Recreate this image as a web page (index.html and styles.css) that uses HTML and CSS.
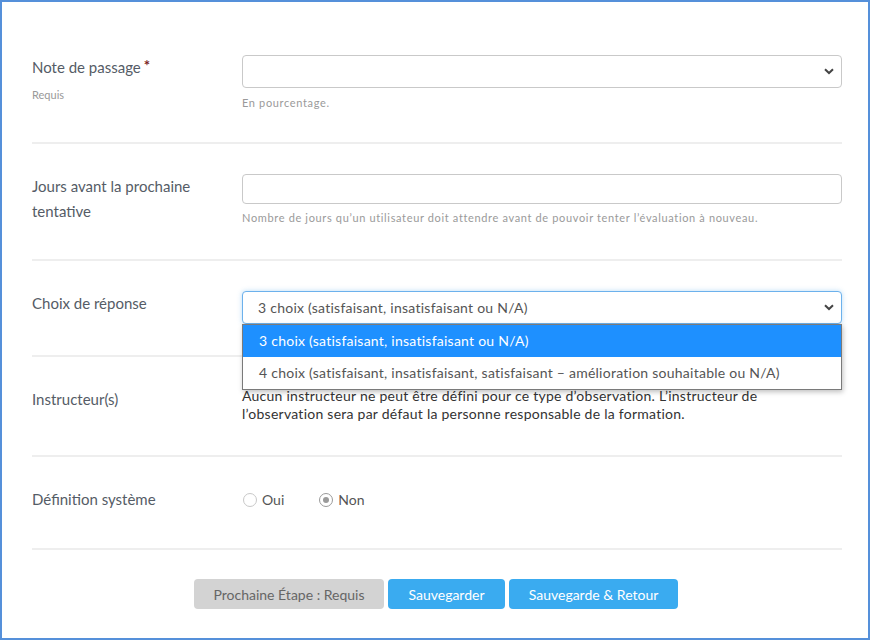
FILE: index.html
```html
<!DOCTYPE html>
<html lang="fr">
<head>
<meta charset="utf-8">
<title>Formulaire</title>
<link rel="stylesheet" href="styles.css">
</head>
<body>
<div class="frame">
  <form class="form">
    <div class="row row-1">
      <div class="label-col">
        <div class="label">Note de passage<span class="req">*</span></div>
        <div class="sub">Requis</div>
      </div>
      <div class="field">
        <div class="select"><span class="value"></span><svg class="chev" width="10" height="7" viewBox="0 0 10 7"><path d="M1 1.2 L5 5 L9 1.2" fill="none" stroke="#444" stroke-width="2"/></svg></div>
        <div class="help">En pourcentage.</div>
      </div>
    </div>
    <div class="row row-2">
      <div class="label-col">
        <div class="label">Jours avant la prochaine tentative</div>
      </div>
      <div class="field">
        <div class="input"></div>
        <div class="help help-tight">Nombre de jours qu’un utilisateur doit attendre avant de pouvoir tenter l’évaluation à nouveau.</div>
      </div>
    </div>
    <div class="row row-3">
      <div class="label-col">
        <div class="label">Choix de réponse</div>
      </div>
      <div class="field">
        <div class="select-wrap">
          <div class="select focus"><span class="value">3 choix (satisfaisant, insatisfaisant ou N/A)</span><svg class="chev" width="10" height="7" viewBox="0 0 10 7"><path d="M1 1.2 L5 5 L9 1.2" fill="none" stroke="#444" stroke-width="2"/></svg></div>
          <ul class="dropdown">
            <li class="opt selected">3 choix (satisfaisant, insatisfaisant ou N/A)</li>
            <li class="opt">4 choix (satisfaisant, insatisfaisant, satisfaisant – amélioration souhaitable ou N/A)</li>
          </ul>
        </div>
      </div>
    </div>
    <div class="row">
      <div class="label-col">
        <div class="label">Instructeur(s)</div>
      </div>
      <div class="field">
        <p class="text">Aucun instructeur ne peut être défini pour ce type d’observation. L’instructeur de<br>l’observation sera par défaut la personne responsable de la formation.</p>
      </div>
    </div>
    <div class="row row-last">
      <div class="label-col">
        <div class="label">Définition système</div>
      </div>
      <div class="field radios">
        <label class="radio"><span class="dot"></span>Oui</label>
        <label class="radio"><span class="dot checked"></span>Non</label>
      </div>
    </div>
    <div class="actions">
      <button type="button" class="btn btn-gray">Prochaine Étape : Requis</button>
      <button type="button" class="btn btn-blue btn-save">Sauvegarder</button>
      <button type="button" class="btn btn-blue btn-return">Sauvegarde &amp; Retour</button>
    </div>
  </form>
</div>
</body>
</html>
```
FILE: styles.css
```css
* { box-sizing: border-box; }
html, body { margin: 0; padding: 0; }
body {
  width: 870px;
  height: 640px;
  font-family: Lato, "Noto Sans", sans-serif;
  background: #fff;
}
.frame {
  width: 870px;
  height: 640px;
  border: 2px solid #5590da;
  background: #fff;
}
.form {
  padding: 23px 26px 0 30px;
}
.row {
  display: flex;
  padding: 30px 0 32px;
  border-bottom: 2px solid #eeeeee;
}
.row-1 { padding-bottom: 31px; }
.row-2 { padding-bottom: 33px; }
.row-3 { padding-bottom: 31px; }
.row-last { padding-bottom: 36px; }
.label-col {
  width: 210px;
  flex: none;
  padding-right: 20px;
}
.label {
  font-size: 15px;
  line-height: 25px;
  color: #555c66;
}
.req {
  color: #7a1f1f;
  font-weight: bold;
  margin-left: 3px;
  font-size: 15px;
  position: relative;
  top: -2px;
}
.sub {
  font-size: 11px;
  color: #999;
  line-height: 14px;
  margin-top: 8px;
}
.field {
  flex: 1;
  min-width: 0;
}
.select, .input {
  height: 33px;
  border: 1px solid #c9c9c9;
  border-radius: 4px;
  background: #fff;
  display: flex;
  align-items: center;
  padding: 0 7px 0 15px;
}
.input { height: 30px; }
.select .value {
  flex: 1;
  font-size: 14px;
  letter-spacing: 0.25px;
  color: #555;
}
.chev { flex: none; }
.select.focus {
  border-color: #6cb1ec;
  box-shadow: 0 0 5px rgba(102, 175, 233, 0.45);
}
.help {
  font-size: 11px;
  letter-spacing: 0.65px;
  color: #9a9a9a;
  line-height: 17px;
  margin-top: 6px;
  white-space: nowrap;
}
.help-tight { margin-top: 5px; }
.select-wrap { position: relative; }
.dropdown {
  position: absolute;
  left: 0;
  right: 0;
  top: 100%;
  margin: 0;
  padding: 0;
  list-style: none;
  background: #fff;
  border: 1px solid #7a7a7a;
  box-shadow: 1px 2px 5px rgba(0,0,0,0.25);
  z-index: 5;
}
.opt {
  height: 32px;
  line-height: 32px;
  padding-left: 16px;
  font-size: 14px;
  letter-spacing: 0.25px;
  color: #555;
}
.opt.selected {
  background: #1e90ff;
  color: #fff;
}
.text {
  margin: 0;
  font-size: 14px;
  letter-spacing: 0.25px;
  line-height: 18px;
  color: #333;
  white-space: nowrap;
}
.radios {
  display: flex;
  align-items: center;
  height: 25px;
}
.radio {
  display: flex;
  align-items: center;
  font-size: 14px;
  color: #555;
  margin-right: 34px;
}
.dot {
  width: 14px;
  height: 14px;
  border: 1px solid #c8c8c8;
  border-radius: 50%;
  margin: 0 5px 0 1px;
  position: relative;
  background: #fff;
}
.dot.checked { border-color: #9a9a9a; }
.dot.checked::after {
  content: "";
  position: absolute;
  left: 3px;
  top: 3px;
  width: 6px;
  height: 6px;
  border-radius: 50%;
  background: #9a9a9a;
}
.actions {
  display: flex;
  justify-content: center;
  gap: 4px;
  margin-top: 29px;
  padding-right: 2px;
}
.btn {
  height: 30px;
  border: none;
  border-radius: 4px;
  font-family: Lato, "Noto Sans", sans-serif;
  font-size: 14px;
  padding: 0;
  white-space: nowrap;
  cursor: pointer;
}
.btn-gray {
  background: #d3d3d3;
  color: #666;
  width: 190px;
}
.btn-blue {
  background: #3aabf0;
  color: #fff;
}
.btn-save { width: 117px; }
.btn-return { width: 169px; }
```
